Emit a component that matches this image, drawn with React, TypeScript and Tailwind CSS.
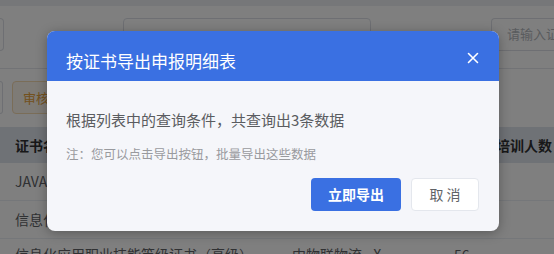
import React from "react";

const font = { fontFamily: '"Noto Sans CJK SC", "Noto Sans", sans-serif' };

export default function App() {
  return (
    <div className="relative w-[554px] h-[254px] overflow-hidden bg-white" style={font}>
      {/* background page */}
      <div className="flex flex-col w-full">
        <div className="h-[6px] bg-[#eceef2]" />
        <div className="flex items-center h-[48px] pt-[8px]">
          <div className="w-[4px] h-[33px] border border-[#dcdfe6] rounded-r-[4px] border-l-0" />
          <div className="ml-[119px] w-[248px] h-[33px] border border-[#dcdfe6] rounded-[4px]" />
          <div className="ml-[120px] flex-1 min-w-0 h-[33px] border border-[#dcdfe6] border-r-0 rounded-l-[4px] flex items-center pl-[15px] text-[13px] text-[#b4b7bd] whitespace-nowrap overflow-hidden">
            请输入证书名称
          </div>
        </div>
        <div className="mt-[14px] h-px bg-[#e4e7ed]" />
        <div className="flex items-center h-[54px] pt-[3px]">
          <div className="w-[3px] h-[33px] border border-[#dcdfe6] border-l-0 rounded-r-[4px]" />
          <div className="ml-[9px] pl-[10px] pr-[15px] h-[33px] border border-[#f5dab1] bg-[#fdf6ec] rounded-[4px] flex items-center text-[13px] text-[#e6a23c] whitespace-nowrap">
            审核通过
          </div>
        </div>
        <div className="mt-[4px] h-[36px] bg-[#dfe4ec] flex items-center text-[14px] font-bold text-[#303133] whitespace-nowrap">
          <div className="pl-[15px] w-[290px]">证书名称</div>
          <div className="w-[160px]">所属机构</div>
          <div className="pl-[46px]">培训人数</div>
        </div>
        <div className="h-[38px] border-b border-[#ebeef5] flex items-center text-[14px] text-[#606266] whitespace-nowrap">
          <div className="pl-[15px] w-[290px]">JAVA应用开发职业技能等级证书</div>
          <div className="w-[160px]">中物联物流 - X</div>
          <div>32</div>
        </div>
        <div className="h-[38px] border-b border-[#ebeef5] flex items-center text-[14px] text-[#606266] whitespace-nowrap">
          <div className="pl-[15px] w-[290px]">信息化应用职业技能等级证书（中级）</div>
          <div className="w-[160px]">中物联物流 - X</div>
          <div>40</div>
        </div>
        <div className="h-[38px] border-b border-[#ebeef5] flex items-start pt-[5px] text-[14px] text-[#606266] whitespace-nowrap">
          <div className="pl-[15px] w-[292px]">信息化应用职业技能等级证书（高级）</div>
          <div className="w-[162px]">中物联物流 - X</div>
          <div>56</div>
        </div>
      </div>

      {/* overlay */}
      <div className="absolute inset-0 bg-black/50" />

      {/* dialog */}
      <div className="absolute left-[47px] top-[31px] w-[452px] h-[200px] rounded-[8px] overflow-hidden bg-[#f5f6fa] shadow-[0_2px_12px_rgba(0,0,0,0.3)] flex flex-col">
        <div className="h-[50px] bg-[#3a70e2] flex items-center justify-between pl-[19px] pr-[20px] pt-[8px]">
          <span className="text-[17px] text-white leading-none">按证书导出申报明细表</span>
          <svg width="12" height="12" viewBox="0 0 12 12" className="mb-[4px]">
            <path d="M1.5 1.5 L10.5 10.5 M10.5 1.5 L1.5 10.5" stroke="white" strokeWidth="1.6" strokeLinecap="round" />
          </svg>
        </div>
        <div className="flex flex-col pl-[19px] pr-[20px] pt-[28px]">
          <div className="text-[15px] leading-[22px] text-[#5a5c60]">根据列表中的查询条件，共查询出3条数据</div>
          <div className="mt-[14px] text-[12.5px] leading-[18px] text-[#999a9e]">注：您可以点击导出按钮，批量导出这些数据</div>
          <div className="mt-[15px] flex justify-end gap-[10px]">
            <div className="w-[90px] h-[33px] rounded-[4px] bg-[#3a70e2] flex items-center justify-center text-[14px] font-bold text-white">
              立即导出
            </div>
            <div className="w-[68px] h-[33px] rounded-[4px] bg-white border border-[#e4e7ed] flex items-center justify-center text-[14px] text-[#606266]">
              取 消
            </div>
          </div>
        </div>
      </div>
    </div>
  );
}
